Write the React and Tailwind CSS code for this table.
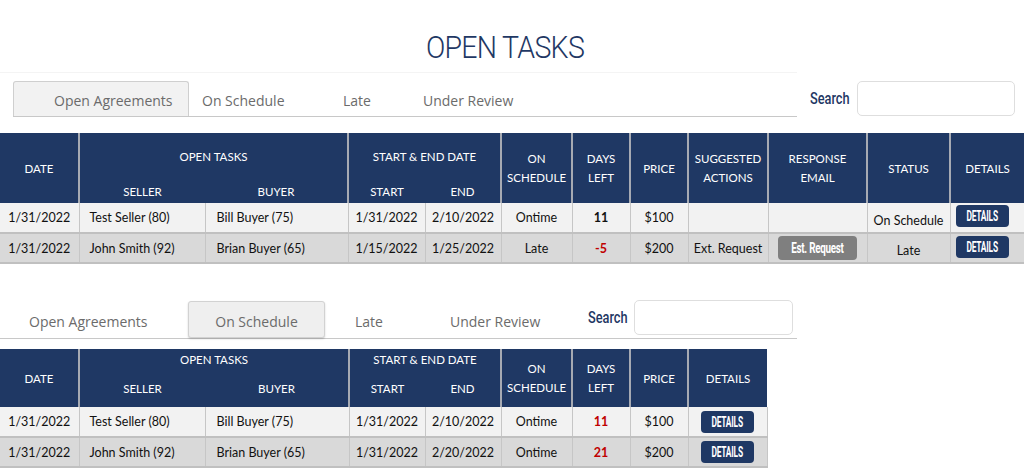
import React from "react";

const NAVY = "bg-[#1f3864]";

function DetailsBtn() {
  return (
    <span className="inline-flex items-center justify-center w-[53px] h-[22px] rounded-[4px] bg-[#1f3864] overflow-hidden align-middle">
      <span className="inline-block text-white text-[14px] font-bold scale-x-[0.6] font-['Roboto',sans-serif] leading-none tracking-tight">
        DETAILS
      </span>
    </span>
  );
}

function EstBtn() {
  return (
    <span className="inline-flex items-center justify-center w-[79px] h-[24px] rounded-[4px] bg-[#7f7f7f] overflow-hidden align-middle">
      <span className="inline-block text-white text-[14px] font-bold scale-x-[0.7] font-['Roboto',sans-serif] leading-none whitespace-nowrap tracking-tight">
        Est. Request
      </span>
    </span>
  );
}

function SearchLabel({ w }) {
  return (
    <div className={`${w} h-[35px] flex items-center`}>
      <span className="inline-block origin-left scale-x-[0.75] text-[17px] font-medium text-[#1f3864] font-['Roboto',sans-serif] leading-none whitespace-nowrap">
        Search
      </span>
    </div>
  );
}

const th = "text-white font-normal text-[11.5px] leading-[19px] text-center align-middle";
const thL = "border-l-2 border-l-[#a6aab3]";
const td = "text-[12.5px] text-[#111] h-[30px] align-middle pt-[2px] border-l border-l-[#c6c6c6] border-b-2 border-b-[#c0c0c0]";

function Table1() {
  const rows = [
    {
      bg: "bg-[#f2f2f2]",
      date: "1/31/2022",
      seller: "Test Seller (80)",
      buyer: "Bill Buyer (75)",
      start: "1/31/2022",
      end: "2/10/2022",
      on: "Ontime",
      days: "11",
      daysCls: "text-[#1f3864]",
      price: "$100",
      sugg: "",
      resp: false,
      status: "On Schedule",
    },
    {
      bg: "bg-[#d9d9d9]",
      date: "1/31/2022",
      seller: "John Smith (92)",
      buyer: "Brian Buyer (65)",
      start: "1/15/2022",
      end: "1/25/2022",
      on: "Late",
      days: "-5",
      daysCls: "text-[#c00000]",
      price: "$200",
      sugg: "Ext. Request",
      resp: true,
      status: "Late",
    },
  ];
  return (
    <table className="table-fixed border-collapse w-[1024px] font-['Lato',sans-serif]">
      <colgroup>
        {[79, 126, 143, 77, 76, 71, 58, 58, 80, 99, 83, 74].map((w, i) => (
          <col key={i} style={{ width: w }} />
        ))}
      </colgroup>
      <thead className={NAVY}>
        <tr className="h-[47px]">
          <th rowSpan={2} className={th}>DATE</th>
          <th colSpan={2} className={`${th} ${thL}`}>OPEN TASKS</th>
          <th colSpan={2} className={`${th} ${thL}`}>START &amp; END DATE</th>
          <th rowSpan={2} className={`${th} ${thL}`}>ON<br />SCHEDULE</th>
          <th rowSpan={2} className={`${th} ${thL}`}>DAYS<br />LEFT</th>
          <th rowSpan={2} className={`${th} ${thL}`}>PRICE</th>
          <th rowSpan={2} className={`${th} ${thL}`}>SUGGESTED<br />ACTIONS</th>
          <th rowSpan={2} className={`${th} ${thL}`}>RESPONSE<br />EMAIL</th>
          <th rowSpan={2} className={`${th} ${thL}`}>STATUS</th>
          <th rowSpan={2} className={`${th} ${thL}`}>DETAILS</th>
        </tr>
        <tr className="h-[23px]">
          <th className={`${th} ${thL}`}>SELLER</th>
          <th className={th}>BUYER</th>
          <th className={`${th} ${thL}`}>START</th>
          <th className={th}>END</th>
        </tr>
      </thead>
      <tbody>
        {rows.map((r, i) => (
          <tr key={i} className={r.bg}>
            <td className={`${td} text-center border-l-0`}>{r.date}</td>
            <td className={`${td} pl-[10px]`}>{r.seller}</td>
            <td className={`${td} pl-[11px]`}>{r.buyer}</td>
            <td className={`${td} text-center`}>{r.start}</td>
            <td className={`${td} text-center`}>{r.end}</td>
            <td className={`${td} text-center`}>{r.on}</td>
            <td className={`${td} text-center font-bold ${r.daysCls}`}>{r.days}</td>
            <td className={`${td} text-center`}>{r.price}</td>
            <td className={`${td} text-center`}>{r.sugg}</td>
            <td className={`${td} text-center !pt-0`}>{r.resp ? <EstBtn /> : null}</td>
            <td className={`${td} text-center !align-bottom pb-[1px]`}>{r.status}</td>
            <td className={`${td} pl-[5px] !align-top !pt-[2px]`}><DetailsBtn /></td>
          </tr>
        ))}
      </tbody>
    </table>
  );
}

function Table2() {
  const rows = [
    { bg: "bg-[#f2f2f2]", seller: "Test Seller (80)", buyer: "Bill Buyer (75)", end: "2/10/2022", days: "11", price: "$100" },
    { bg: "bg-[#d9d9d9]", seller: "John Smith (92)", buyer: "Brian Buyer (65)", end: "2/20/2022", days: "21", price: "$200" },
  ];
  return (
    <table className="table-fixed border-collapse w-[767px] font-['Lato',sans-serif]">
      <colgroup>
        {[79, 126, 144, 76, 76, 71, 58, 58, 79].map((w, i) => (
          <col key={i} style={{ width: w }} />
        ))}
      </colgroup>
      <thead className={NAVY}>
        <tr className="h-[20px]">
          <th rowSpan={2} className={th}>DATE</th>
          <th colSpan={2} className={`${th} ${thL}`}>OPEN TASKS</th>
          <th colSpan={2} className={`${th} ${thL}`}>START &amp; END DATE</th>
          <th rowSpan={2} className={`${th} ${thL}`}>ON<br />SCHEDULE</th>
          <th rowSpan={2} className={`${th} ${thL}`}>DAYS<br />LEFT</th>
          <th rowSpan={2} className={`${th} ${thL}`}>PRICE</th>
          <th rowSpan={2} className={`${th} ${thL}`}>DETAILS</th>
        </tr>
        <tr className="h-[38px]">
          <th className={`${th} ${thL}`}>SELLER</th>
          <th className={th}>BUYER</th>
          <th className={`${th} ${thL}`}>START</th>
          <th className={th}>END</th>
        </tr>
      </thead>
      <tbody>
        {rows.map((r, i) => (
          <tr key={i} className={r.bg}>
            <td className={`${td} text-center border-l-0`}>1/31/2022</td>
            <td className={`${td} pl-[10px]`}>{r.seller}</td>
            <td className={`${td} pl-[11px]`}>{r.buyer}</td>
            <td className={`${td} text-center`}>1/31/2022</td>
            <td className={`${td} text-center`}>{r.end}</td>
            <td className={`${td} text-center`}>Ontime</td>
            <td className={`${td} text-center font-bold text-[#c00000]`}>{r.days}</td>
            <td className={`${td} text-center`}>{r.price}</td>
            <td className={`${td} text-center !pt-0 border-r border-r-[#c6c6c6]`}><DetailsBtn /></td>
          </tr>
        ))}
      </tbody>
    </table>
  );
}

const tabText = "text-[14px] text-[#6b6b6b] font-['Open_Sans',sans-serif] whitespace-nowrap";

export default function App() {
  return (
    <div className="w-[1024px] h-[468px] bg-white overflow-hidden">
      <div className="h-[72px] flex items-center justify-center pr-[14px] pt-[22px]">
        <h1 className="text-[31px] font-light text-[#1f3864] font-['Roboto',sans-serif] tracking-tight leading-none scale-x-[0.92]">
          OPEN TASKS
        </h1>
      </div>

      <div className="flex items-end h-[45px]">
        <div className="w-[797px] h-full border-t border-t-[#f4f4f4] pl-[13px] flex items-end">
          <div className="flex-1 flex items-end border-b border-b-[#c8c8c8] h-full">
            <div className="w-[176px] h-[35px] bg-[#f2f2f2] border border-[#cfcfcf] border-b-0 rounded-t-[3px] flex items-center pl-[40px] pt-[2px]">
              <span className={tabText}>Open Agreements</span>
            </div>
            <div className="h-[35px] flex items-center pt-[4px]">
              <span className={`${tabText} w-[154px] pl-[13px]`}>On Schedule</span>
              <span className={`${tabText} w-[80px]`}>Late</span>
              <span className={tabText}>Under Review</span>
            </div>
          </div>
        </div>
        <div className="ml-[13px] flex items-end mb-[1px]">
          <SearchLabel w="w-[47px]" />
          <div className="w-[158px] h-[35px] rounded-[5px] border border-[#dedede] bg-white" />
        </div>
      </div>

      <div className="mt-[16px]">
        <Table1 />
      </div>

      <div className="mt-[27px] w-[797px] h-[48px] border-b border-b-[#c8c8c8] flex items-end">
        <div className="flex items-end">
          <span className={`${tabText} w-[188px] pl-[29px] pb-[6px]`}>Open Agreements</span>
          <div className="w-[137px] h-[37px] bg-[#efefef] border border-[#d2d2d2] rounded-[3px] shadow-[0_1px_2px_rgba(0,0,0,0.18)] flex items-end justify-center pb-[5px]">
            <span className={tabText}>On Schedule</span>
          </div>
          <span className={`${tabText} w-[125px] pl-[30px] pb-[6px]`}>Late</span>
          <span className={`${tabText} w-[138px] pb-[6px]`}>Under Review</span>
        </div>
        <div className="flex items-end mb-[3px]">
          <SearchLabel w="w-[46px]" />
          <div className="w-[159px] h-[35px] rounded-[5px] border border-[#dedede] bg-white" />
        </div>
      </div>

      <div className="mt-[10px]">
        <Table2 />
      </div>
    </div>
  );
}
